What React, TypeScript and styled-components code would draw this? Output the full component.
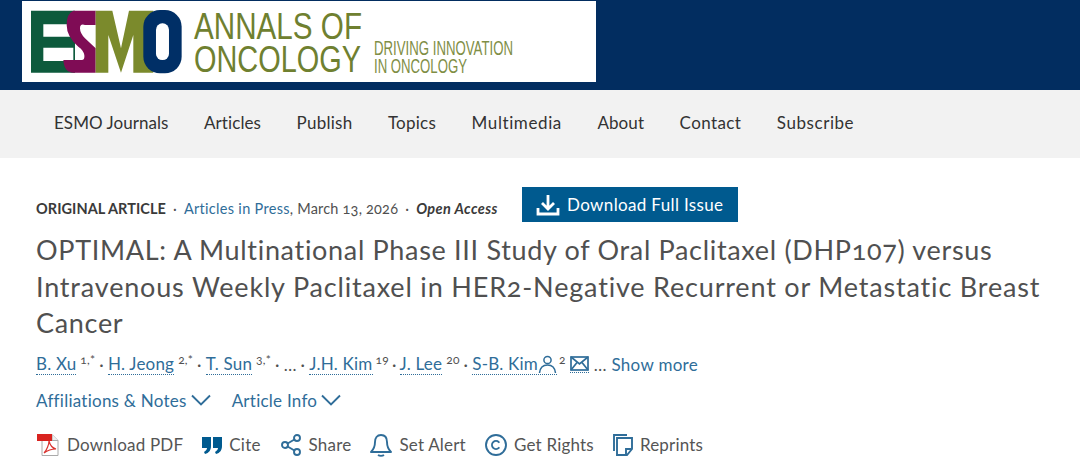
import React from "react";
import styled, { createGlobalStyle } from "styled-components";
import { Share2, Copyright } from "lucide-react";

const Global = createGlobalStyle`
  html, body { margin: 0; padding: 0; background: #fff; }
  body {
    font-family: Lato, "Noto Sans", sans-serif;
    font-variant-numeric: oldstyle-nums;
    width: 1080px;
    height: 466px;
    overflow: hidden;
  }
`;

const Header = styled.header`
  height: 90px;
  background: #022d60;
  padding: 1px 0 0 22px;
  box-sizing: border-box;
`;

const LogoBox = styled.div`
  width: 574px;
  height: 81px;
  background: #fff;
`;

const Nav = styled.nav`
  height: 68px;
  background: #f2f2f2;
  display: flex;
  align-items: center;
  gap: 35.5px;
  padding: 0 0 3px 54px;
  box-sizing: border-box;
`;

const NavItem = styled.a<{ $track: number }>`
  font-size: 17px;
  color: #333;
  letter-spacing: ${(p) => p.$track}px;
`;

const Main = styled.main`
  padding: 29px 0 0 36px;
`;

const MetaRow = styled.div`
  display: flex;
  align-items: center;
  height: 35px;
  font-size: 14.5px;
  color: #505050;
`;

const MetaText = styled.div`
  display: flex;
  align-items: center;
  padding-top: 7px;
  letter-spacing: 0.2px;
`;

const ArticleType = styled.span`
  font-weight: 700;
  color: #3a3a3a;
  letter-spacing: 0.05px;
`;

const Dot = styled.span`
  margin: 0 7px;
`;

const BlueText = styled.a`
  color: #2f6d99;
  letter-spacing: 0.3px;
`;

const OpenAccess = styled.span`
  font-weight: 700;
  font-style: italic;
  color: #3a3a3a;
  letter-spacing: 0.4px;
`;

const DownloadButton = styled.a`
  margin-left: 24px;
  width: 216px;
  height: 35px;
  background: #005a8f;
  color: #fff;
  font-size: 17px;
  display: flex;
  align-items: center;
  justify-content: center;
  gap: 7px;
  letter-spacing: 0.35px;
`;

const Title = styled.h1`
  margin: 10px 0 0;
  width: 1030px;
  font-size: 27px;
  line-height: 36.5px;
  font-weight: 400;
  color: #505050;
  letter-spacing: 0.68px;
`;

const WideLine = styled.span`
  letter-spacing: 0.82px;
`;

const Authors = styled.div`
  margin-top: 11px;
  height: 24px;
  display: flex;
  align-items: center;
  font-size: 17px;
  color: #505050;
  letter-spacing: 0.2px;
`;

const Author = styled.a`
  color: #2f6d99;
  border-bottom: 1px dotted #2f6d99;
  line-height: 20px;
  display: inline-flex;
  align-items: center;
`;

const Sup = styled.span<{ $m?: number }>`
  font-size: 12px;
  margin-left: ${(p) => p.$m ?? 4}px;
  position: relative;
  top: -5px;
`;

const Sep = styled.span<{ $m?: number }>`
  margin: 0 ${(p) => p.$m ?? 4}px;
`;

const ShowMore = styled.a`
  color: #2f6d99;
  margin-left: 5px;
  letter-spacing: 0.3px;
`;

const Ellipsis = styled.span`
  color: #505050;
`;

const InfoRow = styled.div`
  margin-top: 13px;
  display: flex;
  gap: 21px;
`;

const InfoItem = styled.a`
  display: flex;
  align-items: center;
  gap: 4px;
  font-size: 17px;
  color: #2f6d99;
  letter-spacing: 0.25px;
`;

const Actions = styled.div`
  margin-top: 22px;
  display: flex;
  align-items: center;
`;

const Action = styled.a<{ $gap: number }>`
  display: flex;
  align-items: center;
  gap: 6px;
  font-size: 17px;
  color: #555;
  letter-spacing: 0.2px;
  margin-right: ${(p) => p.$gap}px;
`;

const Logo = () => (
  <svg width="574" height="81" viewBox="0 0 574 81">
    <g transform="translate(3 4) scale(0.3333)">
      <path fill="#0d5a3c" d="M18 17h132v186H18z" />
      <path fill="#fff" d="M55 58h95v37H55zM55 128h90v40H55z" />
      <path
        fill="#7f0c55"
        d="M145 17H212V60H180Q165 55 165 70Q165 85 180 100L212 130V203H145Q118 203 115 165H170Q180 165 178 150Q175 135 160 125Q125 95 125 60Q125 25 145 17Z"
      />
      <path fill="#7b8a2c" d="M212 17H262L288 130L312 17H385V203H325V90L288 203L250 90V203H212Z" />
      <rect x="355" y="15" width="115" height="190" rx="50" fill="#002f66" />
      <rect x="393" y="55" width="39" height="110" rx="19" fill="#fff" />
    </g>
    <g fontFamily='"Liberation Sans", sans-serif' fill="#6f8030">
      <text x="172" y="38" fontSize="37" textLength="168" lengthAdjust="spacingAndGlyphs">ANNALS OF</text>
      <text x="172" y="71" fontSize="37" textLength="167" lengthAdjust="spacingAndGlyphs">ONCOLOGY</text>
      <text x="352" y="54" fontSize="20" fill="#7f8e45" textLength="139" lengthAdjust="spacingAndGlyphs">DRIVING INNOVATION</text>
      <text x="352" y="72" fontSize="20" fill="#7f8e45" textLength="93" lengthAdjust="spacingAndGlyphs">IN ONCOLOGY</text>
    </g>
  </svg>
);

const DownloadIcon = () => (
  <svg width="24" height="22" viewBox="0 0 24 22" fill="none" stroke="#fff" strokeWidth="2.8">
    <path d="M12 1v13M6 9l6 6 6-6" />
    <path d="M2 14v6h20v-6" />
  </svg>
);

const PdfIcon = () => (
  <svg width="25" height="24" viewBox="0 0 25 24">
    <path d="M6 1.5h10l6 6v15H6z" fill="#fff" stroke="#aaa" strokeWidth="1" />
    <path d="M16 1.5v6h6" fill="#eee" stroke="#aaa" strokeWidth="1" />
    <rect x="1" y="1" width="15" height="7" fill="#d9231f" />
    <path d="M8 20c3-3 5-9 5-12 1 4 3 7 7 8-4 0-8 1-12 4z" fill="none" stroke="#d9332f" strokeWidth="1.2" />
  </svg>
);

const QuoteIcon = () => (
  <svg width="22" height="22" viewBox="0 0 22 22" fill="#005a8f">
    <path d="M1 3h9v9c0 4-2 7-6 8l-1-2c2-1 3-3 3-4H1zM12 3h9v9c0 4-2 7-6 8l-1-2c2-1 3-3 3-4h-5z" />
  </svg>
);

const BellIcon = () => (
  <svg width="24" height="24" viewBox="0 0 24 24" fill="none" stroke="#2f6d99" strokeWidth="1.9">
    <path d="M12 2c-4 0-6 3-6 7 0 4-1 7-4 10h20c-3-3-4-6-4-10 0-4-2-7-6-7z" strokeLinejoin="round" />
    <path d="M9 22c1.500 1 4.500 1 6 0" />
  </svg>
);

const ReprintsIcon = () => (
  <svg width="22" height="24" viewBox="0 0 22 24" fill="none" stroke="#2f6d99" strokeWidth="1.9">
    <path d="M15 2H2v16" />
    <path d="M5 5h15v11l-5 6H5z" />
    <path d="M14 21v-5h5" />
  </svg>
);

const PersonIcon = () => (
  <svg width="19" height="19" viewBox="0 0 19 19" fill="none" stroke="#2f6d99" strokeWidth="1.5">
    <circle cx="9.5" cy="5" r="3.600" />
    <path d="M1.500 18c.5-5 3.500-8 8-8s7.500 3 8 8" />
  </svg>
);

const EnvelopeIcon = () => (
  <svg width="19" height="16" viewBox="0 0 19 16" fill="none" stroke="#2f6d99" strokeWidth="1.7">
    <rect x="1" y="1" width="17" height="13" />
    <path d="M1 1l8.500 7L18 1M1 14l6-7.500M18 14l-6-7.500" />
  </svg>
);

const Chevron = () => (
  <svg width="20" height="12" viewBox="0 0 20 12" fill="none" stroke="#2f6d99" strokeWidth="1.9">
    <path d="M1 1.500l9 9 9-9" />
  </svg>
);

const navItems = [
  { label: "ESMO Journals", track: 0.05 },
  { label: "Articles", track: 0.1 },
  { label: "Publish", track: 0.25 },
  { label: "Topics", track: 0.25 },
  { label: "Multimedia", track: 0.6 },
  { label: "About", track: 0.1 },
  { label: "Contact", track: 0.4 },
  { label: "Subscribe", track: 0.55 },
];

export default function App() {
  return (
    <>
      <Global />
      <Header>
        <LogoBox>
          <Logo />
        </LogoBox>
      </Header>
      <Nav>
        {navItems.map((n) => (
          <NavItem key={n.label} $track={n.track}>
            {n.label}
          </NavItem>
        ))}
      </Nav>
      <Main>
        <MetaRow>
          <MetaText>
            <ArticleType>ORIGINAL ARTICLE</ArticleType>
            <Dot>·</Dot>
            <BlueText>Articles in Press</BlueText>, March 13, 2026
            <Dot>·</Dot>
            <OpenAccess>Open Access</OpenAccess>
          </MetaText>
          <DownloadButton>
            <DownloadIcon />
            Download Full Issue
          </DownloadButton>
        </MetaRow>
        <Title>
          OPTIMAL: A Multinational Phase III Study of Oral Paclitaxel (DHP107) versus{" "}
          <WideLine>Intravenous Weekly Paclitaxel in HER2-Negative Recurrent or Metastatic Breast</WideLine> Cancer
        </Title>
        <Authors>
          <Author>B. Xu</Author>
          <Sup>1,*</Sup>
          <Sep>·</Sep>
          <Author>H. Jeong</Author>
          <Sup>2,*</Sup>
          <Sep>·</Sep>
          <Author>T. Sun</Author>
          <Sup>3,*</Sup>
          <Sep>·</Sep>
          …
          <Sep>·</Sep>
          <Author>J.H. Kim</Author>
          <Sup $m={3}>19</Sup>
          <Sep $m={3}>·</Sep>
          <Author>J. Lee</Author>
          <Sup>20</Sup>
          <Sep>·</Sep>
          <Author>
            S-B. Kim
            <PersonIcon />
          </Author>
          <Sup $m={2}>2</Sup>
          <Sep $m={2} />
          <Author>
            <EnvelopeIcon />
          </Author>
          <ShowMore>
            <Ellipsis>…</Ellipsis> Show more
          </ShowMore>
        </Authors>
        <InfoRow>
          <InfoItem>
            Affiliations &amp; Notes
            <Chevron />
          </InfoItem>
          <InfoItem>
            Article Info
            <Chevron />
          </InfoItem>
        </InfoRow>
        <Actions>
          <Action $gap={18}>
            <PdfIcon />
            Download PDF
          </Action>
          <Action $gap={18}>
            <QuoteIcon />
            Cite
          </Action>
          <Action $gap={18}>
            <Share2 size={24} color="#2f6d99" strokeWidth={1.9} />
            Share
          </Action>
          <Action $gap={18}>
            <BellIcon />
            Set Alert
          </Action>
          <Action $gap={18}>
            <Copyright size={24} color="#2f6d99" strokeWidth={1.9} />
            Get Rights
          </Action>
          <Action $gap={0}>
            <ReprintsIcon />
            Reprints
          </Action>
        </Actions>
      </Main>
    </>
  );
}
